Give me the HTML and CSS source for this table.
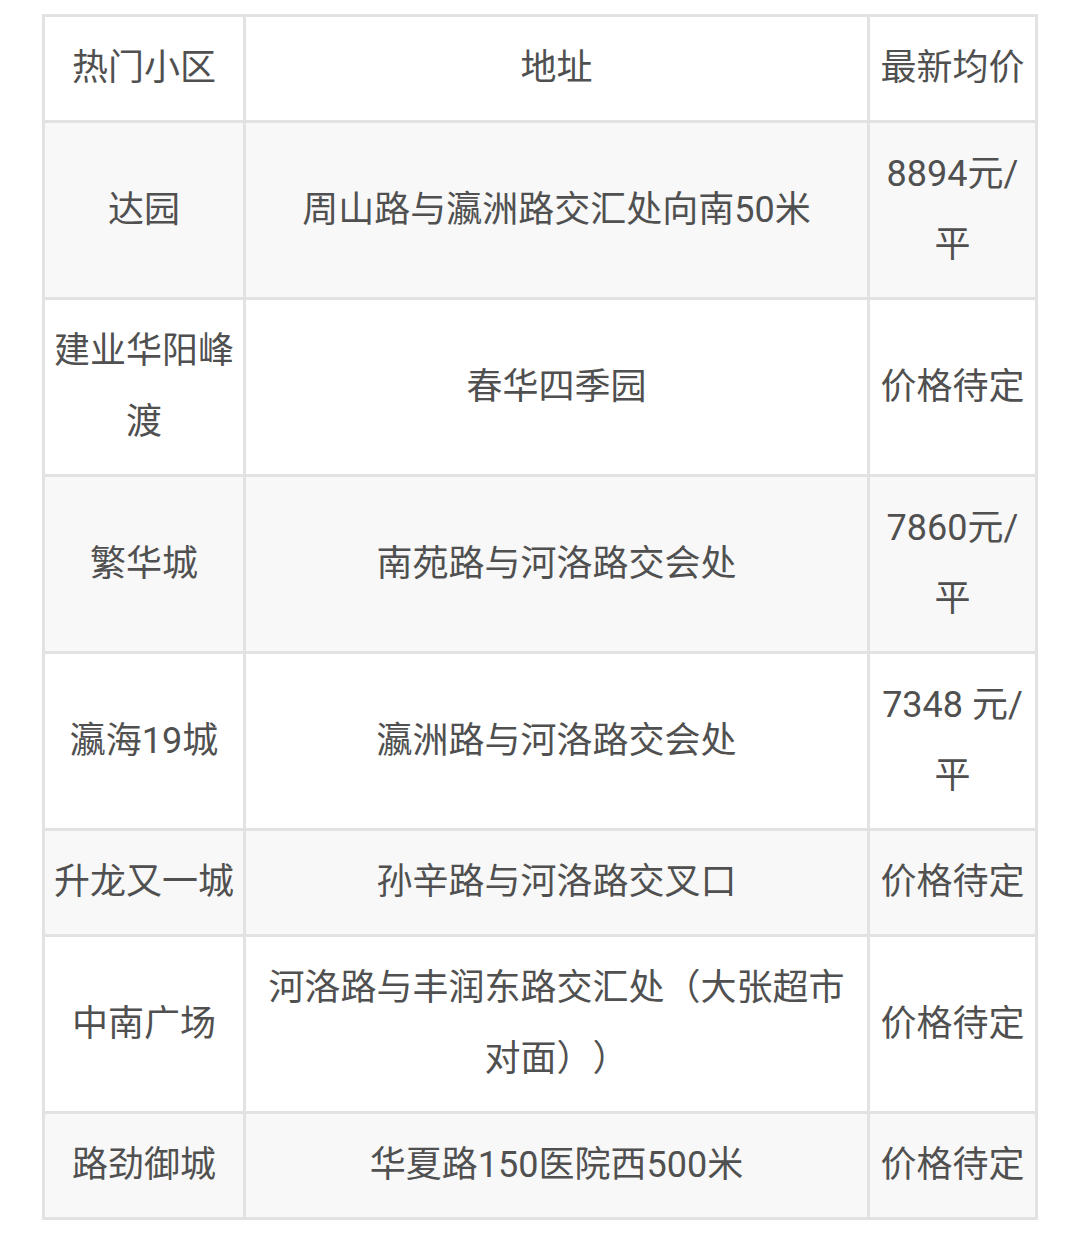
FILE: index.html
```html
<!DOCTYPE html>
<html lang="zh-CN">
<head>
<meta charset="utf-8">
<title>热门小区</title>
<link rel="stylesheet" href="styles.css">
</head>
<body>
<div class="page">
<table class="grid">
  <colgroup>
    <col class="c1"><col class="c2"><col class="c3">
  </colgroup>
  <tbody>
    <tr><td>热门小区</td><td>地址</td><td>最新均价</td></tr>
    <tr class="alt"><td>达园</td><td>周山路与瀛洲路交汇处向南50米</td><td>8894元/平</td></tr>
    <tr><td>建业华阳峰渡</td><td>春华四季园</td><td>价格待定</td></tr>
    <tr class="alt"><td>繁华城</td><td>南苑路与河洛路交会处</td><td>7860元/平</td></tr>
    <tr><td>瀛海19城</td><td>瀛洲路与河洛路交会处</td><td>7348 元/平</td></tr>
    <tr class="alt"><td>升龙又一城</td><td>孙辛路与河洛路交叉口</td><td>价格待定</td></tr>
    <tr><td>中南广场</td><td>河洛路与丰润东路交汇处（大张超市对面））</td><td>价格待定</td></tr>
    <tr class="alt"><td>路劲御城</td><td>华夏路150医院西500米</td><td>价格待定</td></tr>
  </tbody>
</table>
</div>
</body>
</html>
```
FILE: styles.css
```css
html, body {
  margin: 0;
  padding: 0;
  background: #ffffff;
}
.page {
  padding: 14px 42px 0 42px;
}
.grid {
  width: 993px;
  border-collapse: collapse;
  table-layout: fixed;
  font-family: Roboto, "Noto Sans CJK SC", sans-serif;
  font-size: 36px;
  color: #505050;
  text-spacing-trim: space-all;
}
.c1 { width: 201px; }
.c2 { width: 624px; }
.c3 { width: 168px; }
.grid td {
  border: 3px solid #e2e2e2;
  padding: 16px 9px;
  line-height: 71px;
  text-align: center;
  vertical-align: middle;
  word-break: break-all;
}
.grid tr.alt td {
  background: #f8f8f8;
}
```
